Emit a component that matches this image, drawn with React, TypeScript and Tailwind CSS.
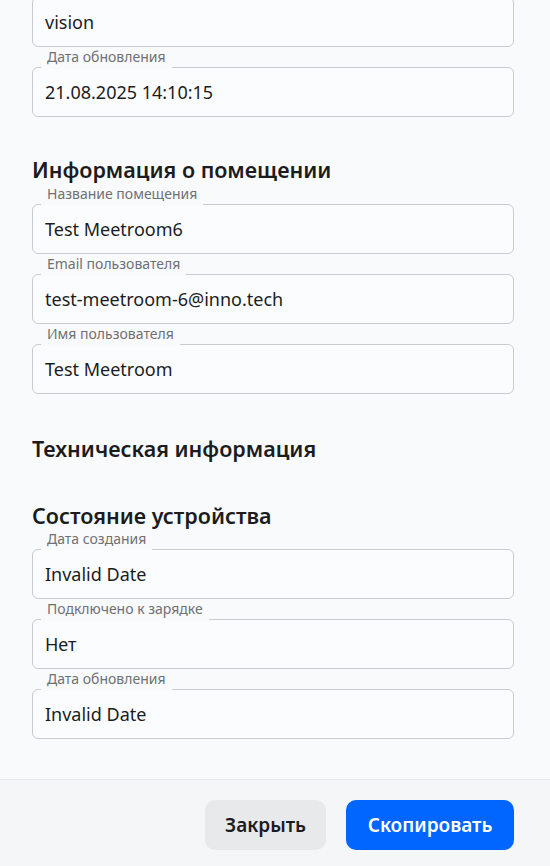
import React from 'react';

interface FieldProps {
  label?: string;
  value: string;
}

const Field: React.FC<FieldProps> = ({ label, value }) => {
  return (
    <div className={label ? 'relative pt-5' : 'relative'}>
      {label && (
        <span className="absolute left-[9px] top-[1px] z-10 h-[21px] bg-[#f9fafc] px-[6px] text-[14px] leading-[18px] text-[#6f7073]">
          {label}
        </span>
      )}
      <div className="flex h-[50px] items-center rounded-[6px] border border-[#c9cbcf] bg-[#fbfcfe] px-3 text-[18px] text-[#1c1c1e]">
        {value}
      </div>
    </div>
  );
};

const SectionTitle: React.FC<{ children: React.ReactNode }> = ({ children }) => (
  <h2 className="h-7 text-[21.5px] font-semibold leading-7 text-[#1c1c1e]">{children}</h2>
);

export default function App() {
  return (
    <div
      className="flex h-[866px] w-[550px] flex-col overflow-hidden bg-[#f9fafc]"
      style={{ fontFamily: '"Noto Sans", "Open Sans", sans-serif' }}
    >
      {/* Scrolled modal body */}
      <div className="flex-1 overflow-hidden pl-8 pr-9">
        <div className="-mt-[3px] flex flex-col">
          <Field value="vision" />
          <Field label="Дата обновления" value="21.08.2025 14:10:15" />

          {/* Room info */}
          <div className="mt-[39px]">
            <SectionTitle>Информация о помещении</SectionTitle>
            <Field label="Название помещения" value="Test Meetroom6" />
            <Field label="Email пользователя" value="test-meetroom-6@inno.tech" />
            <Field label="Имя пользователя" value="Test Meetroom" />
          </div>

          {/* Tech info */}
          <div className="mt-[41px]">
            <SectionTitle>Техническая информация</SectionTitle>
          </div>

          {/* Device state */}
          <div className="mt-[39px]">
            <SectionTitle>Состояние устройства</SectionTitle>
            <div className="-mt-[1px]">
              <Field label="Дата создания" value="Invalid Date" />
              <Field label="Подключено к зарядке" value="Нет" />
              <Field label="Дата обновления" value="Invalid Date" />
            </div>
          </div>
        </div>
      </div>

      {/* Footer */}
      <div className="flex h-[87px] shrink-0 justify-end gap-5 border-t border-[#e6e7ea] bg-[#f5f6f8] pl-8 pr-9 pt-5">
        <button className="h-[50px] w-[121px] rounded-[10px] bg-[#e8e9eb] text-[19px] font-semibold text-[#1c1c1e]">
          Закрыть
        </button>
        <button className="h-[50px] w-[168px] rounded-[10px] bg-[#0066ff] text-[19px] font-semibold text-white">
          Скопировать
        </button>
      </div>
    </div>
  );
}
